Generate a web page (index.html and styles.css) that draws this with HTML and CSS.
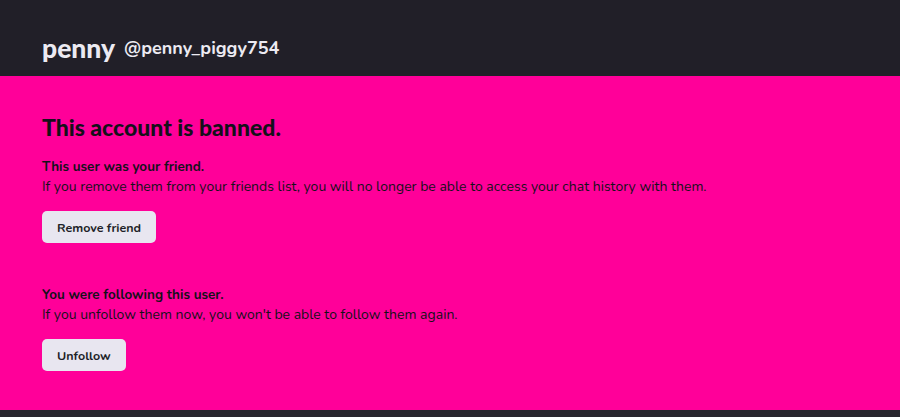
FILE: index.html
```html
<!DOCTYPE html>
<html lang="en">
<head>
<meta charset="UTF-8">
<meta name="viewport" content="width=device-width, initial-scale=1.0">
<title>penny - banned</title>
<link rel="stylesheet" href="styles.css">
</head>
<body>

  <header class="topbar">
    <span class="display-name">penny</span>
    <span class="handle">@penny_piggy754</span>
  </header>

  <main class="banned">
    <h1>This account is banned.</h1>

    <section class="notice">
      <h2>This user was your friend.</h2>
      <p>If you remove them from your friends list, you will no longer be able to access your chat history with them.</p>
      <button type="button">Remove friend</button>
    </section>

    <section class="notice">
      <h2>You were following this user.</h2>
      <p>If you unfollow them now, you won't be able to follow them again.</p>
      <button type="button">Unfollow</button>
    </section>
  </main>

  <footer class="bottombar"></footer>

</body>
</html>
```

FILE: styles.css
```css
body {
  font-family: 'Nunito', 'Noto Sans', sans-serif;
  margin: 0;
  padding: 0;
  background-color: #28262e;
  min-height: 100vh;
  display: flex;
  flex-direction: column;
}

.topbar {
  background-color: #211f28;
  height: 76px;
  display: flex;
  align-items: flex-end;
  gap: 9px;
  padding: 0 42px 15px;
  box-sizing: border-box;
  color: #eceaf2;
  font-weight: bold;
}

.display-name {
  font-family: 'Lato', sans-serif;
  font-weight: 900;
  font-size: 26.5px;
  line-height: 1;
}

.handle {
  font-size: 18px;
  line-height: 1;
  padding-bottom: 4px;
}

.banned {
  background-color: #ff0099;
  height: 334px;
  padding: 37px 42px 0;
  box-sizing: border-box;
  color: #14101a;
}

h1 {
  font-family: 'Lato', sans-serif;
  font-weight: 900;
  font-size: 23px;
  margin: 0 0 16px;
}

.notice {
  margin-bottom: 42px;
}

h2 {
  font-size: 13.5px;
  font-weight: bold;
  margin: 0;
  line-height: 20px;
}

p {
  font-size: 14px;
  margin: 0 0 14px;
  line-height: 20px;
}

button {
  padding: 0 15px;
  height: 32px;
  border: none;
  border-radius: 5px;
  font-family: inherit;
  font-size: 12.5px;
  font-weight: bold;
  background-color: #e8e6f0;
  color: #211f28;
  cursor: pointer;
}

.bottombar {
  flex: 1;
}
```
